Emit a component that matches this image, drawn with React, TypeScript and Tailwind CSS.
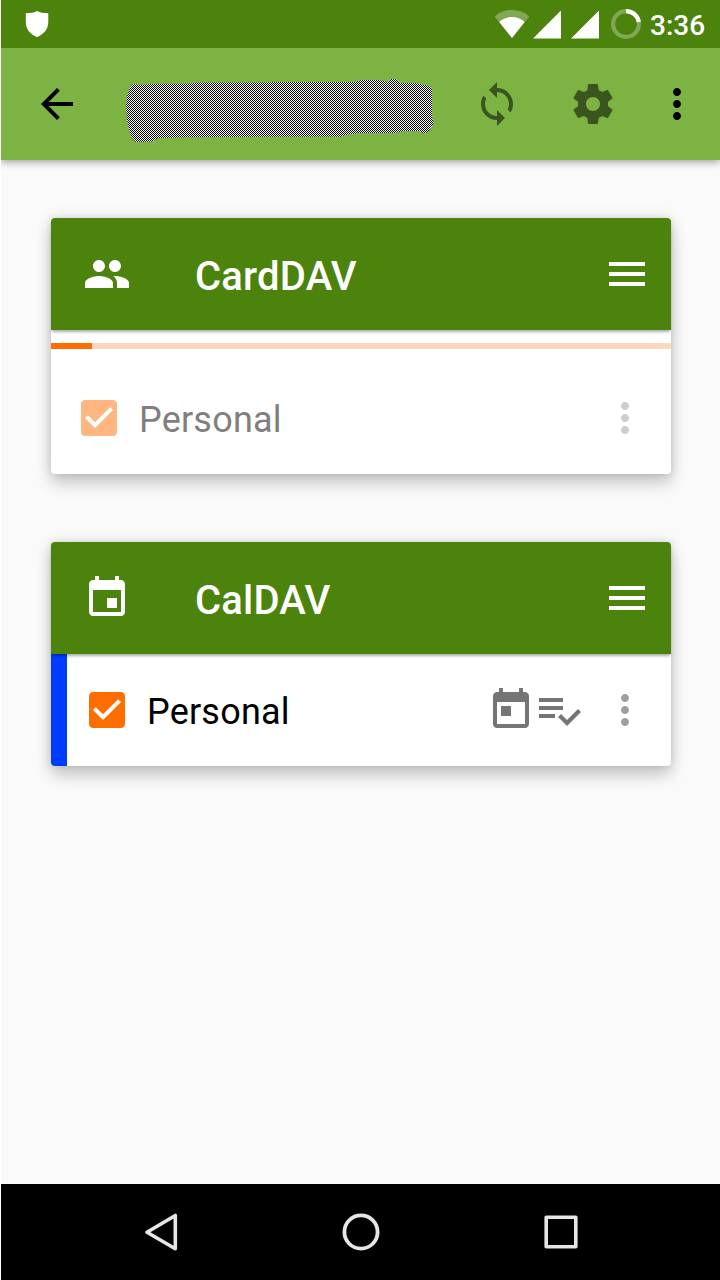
import type { ReactNode } from "react";

const PATHS = {
  back: "M20 11H7.83l5.59-5.59L12 4l-8 8 8 8 1.41-1.41L7.83 13H20v-2z",
  sync: "M12 4V1L8 5l4 4V6c3.31 0 6 2.69 6 6 0 1.01-.25 1.97-.7 2.8l1.46 1.46C19.54 15.03 20 13.57 20 12c0-4.42-3.58-8-8-8zm0 14c-3.31 0-6-2.69-6-6 0-1.01.25-1.97.7-2.8L5.24 7.74C4.46 8.97 4 10.43 4 12c0 4.42 3.58 8 8 8v3l4-4-4-4v3z",
  settings:
    "M19.43 12.98c.04-.32.07-.64.07-.98s-.03-.66-.07-.98l2.11-1.65c.19-.15.24-.42.12-.64l-2-3.46c-.12-.22-.39-.3-.61-.22l-2.49 1c-.52-.4-1.08-.73-1.69-.98l-.38-2.65C14.46 2.18 14.25 2 14 2h-4c-.25 0-.46.18-.49.42l-.38 2.65c-.61.25-1.17.59-1.69.98l-2.49-1c-.23-.09-.49 0-.61.22l-2 3.46c-.13.22-.07.49.12.64l2.11 1.65c-.04.32-.07.65-.07.98s.03.66.07.98l-2.11 1.65c-.19.15-.24.42-.12.64l2 3.46c.12.22.39.3.61.22l2.49-1c.52.4 1.08.73 1.69.98l.38 2.65c.03.24.24.42.49.42h4c.25 0 .46-.18.49-.42l.38-2.65c.61-.25 1.17-.59 1.69-.98l2.49 1c.23.09.49 0 .61-.22l2-3.46c.12-.22.07-.49-.12-.64l-2.11-1.65zM12 15.5c-1.93 0-3.5-1.57-3.5-3.5s1.57-3.5 3.5-3.5 3.5 1.57 3.5 3.5-1.57 3.5-3.5 3.5z",
  more: "M12 8c1.1 0 2-.9 2-2s-.9-2-2-2-2 .9-2 2 .9 2 2 2zm0 2c-1.1 0-2 .9-2 2s.9 2 2 2 2-.9 2-2-.9-2-2-2zm0 6c-1.1 0-2 .9-2 2s.9 2 2 2 2-.9 2-2-.9-2-2-2z",
  people:
    "M16 11c1.66 0 2.99-1.34 2.99-3S17.66 5 16 5c-1.66 0-3 1.34-3 3s1.34 3 3 3zm-8 0c1.66 0 2.99-1.34 2.99-3S9.66 5 8 5C6.34 5 5 6.34 5 8s1.34 3 3 3zm0 2c-2.33 0-7 1.17-7 3.5V19h14v-2.5c0-2.33-4.67-3.5-7-3.5zm8 0c-.29 0-.62.02-.97.05 1.16.84 1.97 1.97 1.97 3.45V19h6v-2.5c0-2.33-4.67-3.5-7-3.5z",
  event:
    "M17 12h-5v5h5v-5zM16 1v2H8V1H6v2H5c-1.11 0-1.99.9-1.99 2L3 19c0 1.1.89 2 2 2h14c1.1 0 2-.9 2-2V5c0-1.1-.9-2-2-2h-1V1h-2zm3 18H5V8h14v11z",
  today:
    "M19 3h-1V1h-2v2H8V1H6v2H5c-1.11 0-1.99.9-1.99 2L3 19c0 1.1.89 2 2 2h14c1.1 0 2-.9 2-2V5c0-1.1-.9-2-2-2zm0 16H5V8h14v11zM7 10h5v5H7z",
  tasks:
    "M14 10H2v2h12v-2zm0-4H2v2h12V6zM2 16h8v-2H2v2zm19.5-4.5L23 13l-6.99 7-4.51-4.5L13 14l3.01 3 5.49-5.5z",
  menu: "M3 18h18v-2H3v2zm0-5h18v-2H3v2zm0-7v2h18V6H3z",
  checkbox:
    "M19 3H5c-1.11 0-2 .9-2 2v14c0 1.1.89 2 2 2h14c1.11 0 2-.9 2-2V5c0-1.1-.89-2-2-2zm-9 14l-5-5 1.41-1.41L10 14.17l7.59-7.59L19 8l-9 9z",
};

function Icon({ name, className = "" }: { name: keyof typeof PATHS; className?: string }) {
  return (
    <svg viewBox="0 0 24 24" fill="currentColor" className={`size-12 shrink-0 ${className}`}>
      <path d={PATHS[name]} />
    </svg>
  );
}

function Signal({ className }: { className: string }) {
  return (
    <svg viewBox="0 0 28 29" className={`h-[29px] w-7 ${className}`} fill="#fff">
      <path d="M28.500 0v28.500H0z" />
    </svg>
  );
}

function StatusBar() {
  return (
    <div className="relative z-10 flex h-12 items-start bg-[#4c830d] pl-6 text-white">
      <svg viewBox="0 0 24 28" className="mt-[10px] h-7 w-6" fill="#fff">
        <path d="M12 1C9.500 2.900 5.500 3 .8 3.300V12c0 7 4.500 12.500 11.200 15C18.700 24.500 23.300 19 23.300 12V3.300C18.500 3 14.500 2.900 12 1z" />
      </svg>
      <svg viewBox="0 0 36 29" className="ml-[445px] mt-[10px] h-[29px] w-9" fill="#fff">
        <path opacity=".3" d="M.7 6.400C10-2.100 25.600-2.100 35.200 6.400L18 28z" />
        <path d="M5.200 11.900C12 5.500 23.600 5.500 30.600 11.900L18 28z" />
      </svg>
      <Signal className="ml-[3px] mt-[10px]" />
      <Signal className="ml-[10px] mt-[10px]" />
      <svg viewBox="0 0 32 32" className="ml-[11px] mt-2 size-8" fill="none" stroke="#fff" strokeWidth="4.200">
        <circle cx="16" cy="16" r="12.900" opacity=".3" />
        <path d="M16 3.100A12.900 12.900 0 0 1 28.800 14" />
      </svg>
      <span className="ml-2 mt-[10px] text-[28px] font-medium leading-8">3:36</span>
    </div>
  );
}

function RedactedTitle() {
  return (
    <div className="ml-[43px] mt-[29px] h-[66px] w-[312px] bg-[conic-gradient(#000_25%,#fff_0_50%,#000_0_75%,#fff_0)] bg-[length:2px_2px] [clip-path:path('M9_7L18_8L26_7L68_6.5L72_5.5L145_5.5L150_5L231_5L238_3L254_3L264_5L267_2L272_2L276_6L291_6L306_9L308_13L308_41L310_46L304_55L300_56.5L295_54L280_54L271_56L236_56L221_58L216_60L211_59.5L76_60L34_61L28_64.5L12_65L7_60L5_51L3_43L2_28L3_19L6_10Z')]" />
  );
}

function AppBar() {
  return (
    <div className="relative flex h-28 bg-[#7db343] pl-8 shadow-[0_2px_8px_rgba(0,0,0,0.38)]">
      <Icon name="back" className="mt-8 text-black" />
      <RedactedTitle />
      <Icon name="sync" className="ml-[37px] mt-8 text-[#3b551f]" />
      <Icon name="settings" className="ml-12 mt-8 text-[#3b551f]" />
      <Icon name="more" className="ml-9 mt-8 text-black" />
    </div>
  );
}

function Card({ icon, title, children }: { icon: "people" | "event"; title: string; children: ReactNode }) {
  return (
    <section className="mx-[50px] mr-[49px] rounded-[4px] bg-white shadow-[0_10px_16px_rgba(0,0,0,0.18),0_0_16px_rgba(0,0,0,0.1),0_0_6px_rgba(0,0,0,0.08)]">
      <header className="relative flex h-28 items-center rounded-t-[4px] bg-[#4c830d] pl-8 pr-5 text-white shadow-[0_3px_3px_-1px_rgba(0,0,0,0.32)]">
        <Icon name={icon} />
        <h2 className="ml-16 grow pt-[6px] text-[40px] font-medium leading-[48px] tracking-[0.2px]">{title}</h2>
        <Icon name="menu" />
      </header>
      {children}
    </section>
  );
}

function NavBar() {
  return (
    <nav className="flex h-24 items-center bg-black">
      <svg viewBox="0 0 48 48" className="ml-[135px] size-12" fill="none" stroke="#e6e6e6" strokeWidth="3.600" strokeLinejoin="round">
        <path d="M11 24.200L39.300 7.500V40.700z" />
      </svg>
      <svg viewBox="0 0 48 48" className="ml-[153px] size-12" fill="none" stroke="#e6e6e6" strokeWidth="3.800">
        <circle cx="24" cy="24" r="16.600" />
      </svg>
      <svg viewBox="0 0 48 48" className="ml-[152px] size-12" fill="none" stroke="#e6e6e6" strokeWidth="3.600" strokeLinejoin="round">
        <rect x="9.200" y="9.200" width="29.600" height="29.600" />
      </svg>
    </nav>
  );
}

export default function App() {
  return (
    <div className="h-[1280px] w-[720px] overflow-hidden bg-white pl-px font-['Roboto',sans-serif]">
      <div className="flex h-full flex-col overflow-hidden bg-[#fafafa]">
        <StatusBar />
        <AppBar />
        <main className="flex grow flex-col gap-[68px] pt-[58px]">
          <Card icon="people" title="CardDAV">
            <div className="pt-[13px]">
              <div className="h-[6px] bg-[#ffd7bc]">
                <div className="h-full w-[40.5px] bg-[#ff6d00]" />
              </div>
            </div>
            <div className="flex h-[125px] items-start pl-6 pr-[22px] pt-[45px]">
              <Icon name="checkbox" className="text-[#ffb680]" />
              <span className="ml-4 mt-1 grow text-[36px] leading-[44px] tracking-[0.2px] text-[#7f7f7f]">Personal</span>
              <Icon name="more" className="text-[#cecece]" />
            </div>
          </Card>
          <Card icon="event" title="CalDAV">
            <div className="flex h-28 items-center overflow-hidden rounded-b-[4px] pr-[22px]">
              <div className="h-full w-4 bg-[#003cff]" />
              <Icon name="checkbox" className="ml-4 text-[#ff6d00]" />
              <span className="ml-4 mt-1 grow text-[36px] leading-[44px] tracking-[0.2px] text-black">Personal</span>
              <Icon name="today" className="text-[#757575]" />
              <Icon name="tasks" className="text-[#757575]" />
              <Icon name="more" className="ml-[18px] text-[#9e9e9e]" />
            </div>
          </Card>
        </main>
        <NavBar />
      </div>
    </div>
  );
}
